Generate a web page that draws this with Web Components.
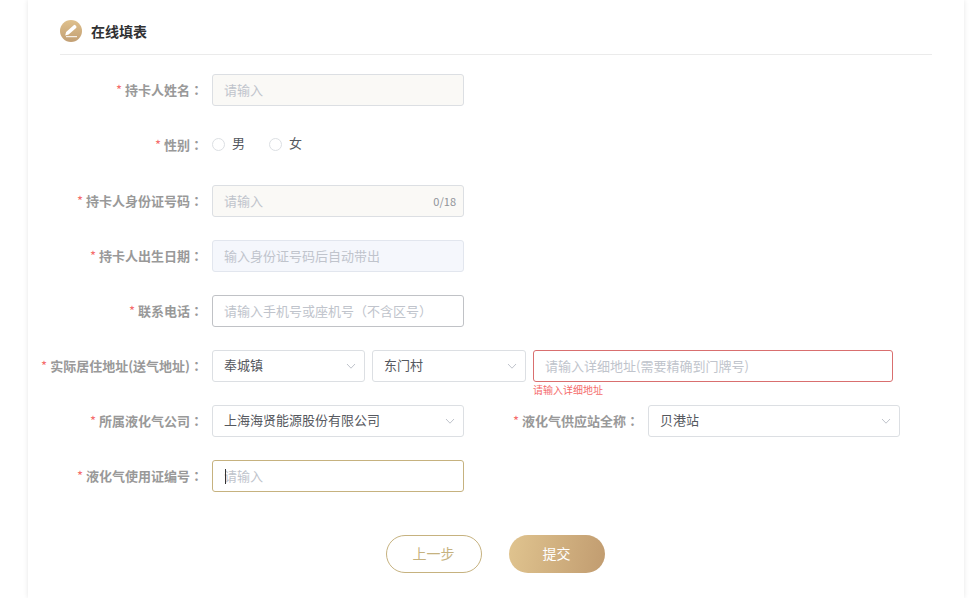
<!DOCTYPE html>
<html lang="zh-CN">
<head>
<meta charset="utf-8">
<meta name="viewport" content="width=device-width, initial-scale=1">
<title>在线填表</title>
<style>
  :root {
    --gold: #c6b27f;
    --ink: #55585e;
    --label: #999;
    --mut: #c0c4cc;
    --bd: #dcdfe3;
    --err: #f56c6c;
    --fs: 13px;
  }
  body {
    margin: 0;
    background: #fff;
    color: var(--ink);
    font: 13px/32px "Noto Sans CJK SC", "Liberation Sans", sans-serif;
  }
</style>
</head>
<body>

<form-card>
  <card-title>在线填表</card-title>
  <form-grid>
    <text-field label="持卡人姓名" placeholder="请输入" tone="soft"></text-field>
    <radio-field label="性别" options="男,女"></radio-field>
    <text-field label="持卡人身份证号码" placeholder="请输入" tone="soft" max="18"></text-field>
    <text-field label="持卡人出生日期" placeholder="输入身份证号码后自动带出" tone="disabled"></text-field>
    <text-field label="联系电话" placeholder="请输入手机号或座机号（不含区号）" tone="hover"></text-field>
    <address-field label="实际居住地址(送气地址)" town="奉城镇" village="东门村"
      placeholder="请输入详细地址(需要精确到门牌号)" error="请输入详细地址"></address-field>
    <select-field label="所属液化气公司" value="上海海贤能源股份有限公司"></select-field>
    <select-field label="液化气供应站全称" value="贝港站" second></select-field>
    <text-field label="液化气使用证编号" placeholder="请输入" tone="active"></text-field>
  </form-grid>
  <pill-button slot="actions">上一步</pill-button>
  <pill-button slot="actions" primary>提交</pill-button>
</form-card>

<script>
'use strict';

// ── Styles shared by every field ─────────────────────────────────────────────
const FIELD_STYLE = `
  :host { display: grid; grid-column: 1 / 3; grid-template-columns: subgrid; }
  :host([second]) { grid-column: 3 / 5; }
  * { box-sizing: border-box; }
  .label {
    padding: 0 9px 0 0; text-align: right; white-space: nowrap;
    font-size: var(--fs); font-weight: 700; color: var(--label);
  }
  .label::before { content: "*"; margin-right: 3px; font-weight: 400; color: var(--err); }
  /* the full-width colon is centred in its em box */
  .colon { font-family: "Noto Sans CJK TC", sans-serif; }
  .box {
    position: relative; display: flex; align-items: center; height: 32px;
    background: #fff; border: 1px solid var(--bd); border-radius: 3px;
  }
  .box.soft { background: #faf9f6; }
  .box.disabled { background: #f5f7fc; border-color: #e2e6ee; }
  .box.hover { border-color: #c0c2c6; }
  .box.active { border-color: var(--gold); }
  .box.error { border-color: #d96f6f; }
  input[type="text"], select {
    flex: 1; min-width: 0; width: 100%; height: 30px; margin: 0; padding: 0 11px 2px;
    border: 0; outline: 0; background: transparent; appearance: none;
    font: inherit; font-size: var(--fs); line-height: 28px; color: var(--ink);
  }
  input::placeholder { color: var(--mut); opacity: 1; }
  select { padding-right: 28px; cursor: pointer; }
  .arrow { position: absolute; right: 8px; top: 10px; width: 10px; height: 10px; pointer-events: none; }
  .caret { position: absolute; left: 12px; top: 8px; width: 1px; height: 15px; background: #333; }
  .count { padding-right: 7px; font-size: 11px; color: #909399; }
`;

const labelHtml = (text) =>
    `<label class="label" for="ctl">${text}<span class="colon" lang="zh-TW">：</span></label>`;

const selectHtml = (id, value, name) => `
  <div class="box">
    <select id="${id}" ${name ? `aria-label="${name}"` : ''}><option>${value}</option></select>
    <svg class="arrow" viewBox="0 0 10 10" fill="none" stroke="#c0c4cc" aria-hidden="true">
      <path d="M1 3l4 4.2L9 3"/>
    </svg>
  </div>`;

// Base: attaches the root and renders what the subclass returns.
class FieldElement extends HTMLElement {
    connectedCallback() {
        if (this.shadowRoot) return;
        this.attachShadow({ mode: 'open' });
        this.shadowRoot.innerHTML = `<style>${FIELD_STYLE}</style>${this.render()}`;
        this.ready();
    }
    attr(name) { return this.getAttribute(name) || ''; }
    ready() {}
}

class TextField extends FieldElement {
    render() {
        const tone = this.attr('tone');
        const max = this.attr('max');
        return `${labelHtml(this.attr('label'))}
          <div class="box ${tone}">
            <input type="text" id="ctl" placeholder="${this.attr('placeholder')}"
              ${max ? `maxlength="${max}"` : ''} ${tone === 'disabled' ? 'disabled' : ''}>
            ${tone === 'active' ? '<i class="caret"></i>' : ''}
            ${max ? `<span class="count">0/${max}</span>` : ''}
          </div>`;
    }
    ready() {
        const input = this.shadowRoot.querySelector('input');
        const count = this.shadowRoot.querySelector('.count');
        const caret = this.shadowRoot.querySelector('.caret');
        input.addEventListener('input', () => {
            if (count) count.textContent = `${input.value.length}/${this.attr('max')}`;
        });
        if (caret) input.addEventListener('focus', () => caret.remove());
    }
}

class SelectField extends FieldElement {
    render() {
        return labelHtml(this.attr('label')) + selectHtml('ctl', this.attr('value'));
    }
}

class RadioField extends FieldElement {
    render() {
        const radios = this.attr('options').split(',').map(o =>
            `<label class="opt"><input type="radio" name="opt" value="${o}"><span>${o}</span></label>`).join('');
        return `
          <style>
            :host { height: 33px; }
            .group { display: flex; align-items: center; gap: 24px; height: 30px; }
            .opt { display: flex; align-items: center; gap: 7px; }
            .opt span { padding-bottom: 2px; }
            .opt input {
              appearance: none; width: 13px; height: 13px; margin: 0;
              border: 1px solid var(--bd); border-radius: 50%; background: #fff;
            }
            .opt input:checked { border: 4px solid var(--gold); }
          </style>
          <span class="label" id="name">${this.attr('label')}<span class="colon" lang="zh-TW">：</span></span>
          <div class="group" role="radiogroup" aria-labelledby="name">${radios}</div>`;
    }
}

class AddressField extends FieldElement {
    render() {
        return `
          <style>
            :host { grid-column: 1 / -1; }
            .parts {
              grid-column: 2 / -1; display: grid; gap: 7px; padding-right: 7px;
              grid-template-columns: minmax(0, 153fr) minmax(0, 154fr) minmax(0, 360fr);
            }
            .msg { position: absolute; left: -1px; top: 32px; font-size: 10px; line-height: 14px; color: var(--err); }
          </style>
          ${labelHtml(this.attr('label'))}
          <div class="parts">
            ${selectHtml('ctl', this.attr('town'))}
            ${selectHtml('village', this.attr('village'), '村')}
            <div class="box error">
              <input type="text" aria-label="详细地址" aria-describedby="msg" placeholder="${this.attr('placeholder')}">
              <span class="msg" id="msg">${this.attr('error')}</span>
            </div>
          </div>`;
    }
}

// ── Layout ───────────────────────────────────────────────────────────────────
class FormGrid extends HTMLElement {
    constructor() {
        super();
        this.attachShadow({ mode: 'open' }).innerHTML = `
          <style>
            :host {
              display: grid; row-gap: 23px; padding: 19px 64px 0 12px;
              grid-template-columns: 172px minmax(0, 252fr) 184px minmax(0, 252fr);
            }
          </style>
          <slot></slot>`;
    }
}

class FormCard extends HTMLElement {
    constructor() {
        super();
        this.attachShadow({ mode: 'open' }).innerHTML = `
          <style>
            :host {
              display: block; box-sizing: border-box; min-height: 100vh;
              margin: 0 11px 0 28px; background: #fff;
              box-shadow: 0 0 5px rgba(0, 0, 0, .1);
            }
            .actions { display: flex; justify-content: center; gap: 27px; padding: 43px 2px 24px 0; }
          </style>
          <slot></slot>
          <div class="actions"><slot name="actions"></slot></div>`;
    }
}

class CardTitle extends HTMLElement {
    constructor() {
        super();
        this.attachShadow({ mode: 'open' }).innerHTML = `
          <style>
            :host {
              display: flex; align-items: center; gap: 9px; margin: 0 32px;
              padding: 15px 0 7px; border-bottom: 1px solid #ebebeb;
            }
            svg { width: 22px; height: 22px; }
            h1 { margin: 0; font-size: 14px; line-height: 32px; font-weight: 700; color: #303133; }
          </style>
          <svg viewBox="0 0 22 22" aria-hidden="true">
            <defs><linearGradient id="g" x1="0" y1="0" x2="0" y2="1">
              <stop offset="0" stop-color="#dfc08c"/><stop offset="1" stop-color="#c29f74"/>
            </linearGradient></defs>
            <circle cx="11" cy="11" r="11" fill="url(#g)"/>
            <path fill="#fff" d="M5.2 15.4l.9-3.4 7.6-6.8q.9-.7 1.7.1l.8.9q.8.9-.1 1.7l-7.5 6.6z"/>
            <path stroke="#fff" stroke-width="1" d="M6 16.7h11"/>
          </svg>
          <h1><slot></slot></h1>`;
    }
}

class PillButton extends HTMLElement {
    constructor() {
        super();
        this.attachShadow({ mode: 'open' }).innerHTML = `
          <style>
            :host { display: block; }
            button {
              width: 96px; height: 38px; padding: 0 0 2px; border: 1px solid var(--gold); border-radius: 19px;
              background: #fff; color: var(--gold); font: inherit; font-size: 14px; line-height: 34px; cursor: pointer;
            }
            :host([primary]) button {
              border: 0; color: #fff; background: linear-gradient(100deg, #e0c48f, #c19c70);
            }
          </style>
          <button type="button"><slot></slot></button>`;
    }
}

customElements.define('text-field', TextField);
customElements.define('select-field', SelectField);
customElements.define('radio-field', RadioField);
customElements.define('address-field', AddressField);
customElements.define('form-grid', FormGrid);
customElements.define('card-title', CardTitle);
customElements.define('pill-button', PillButton);
customElements.define('form-card', FormCard);
</script>
</body>
</html>
